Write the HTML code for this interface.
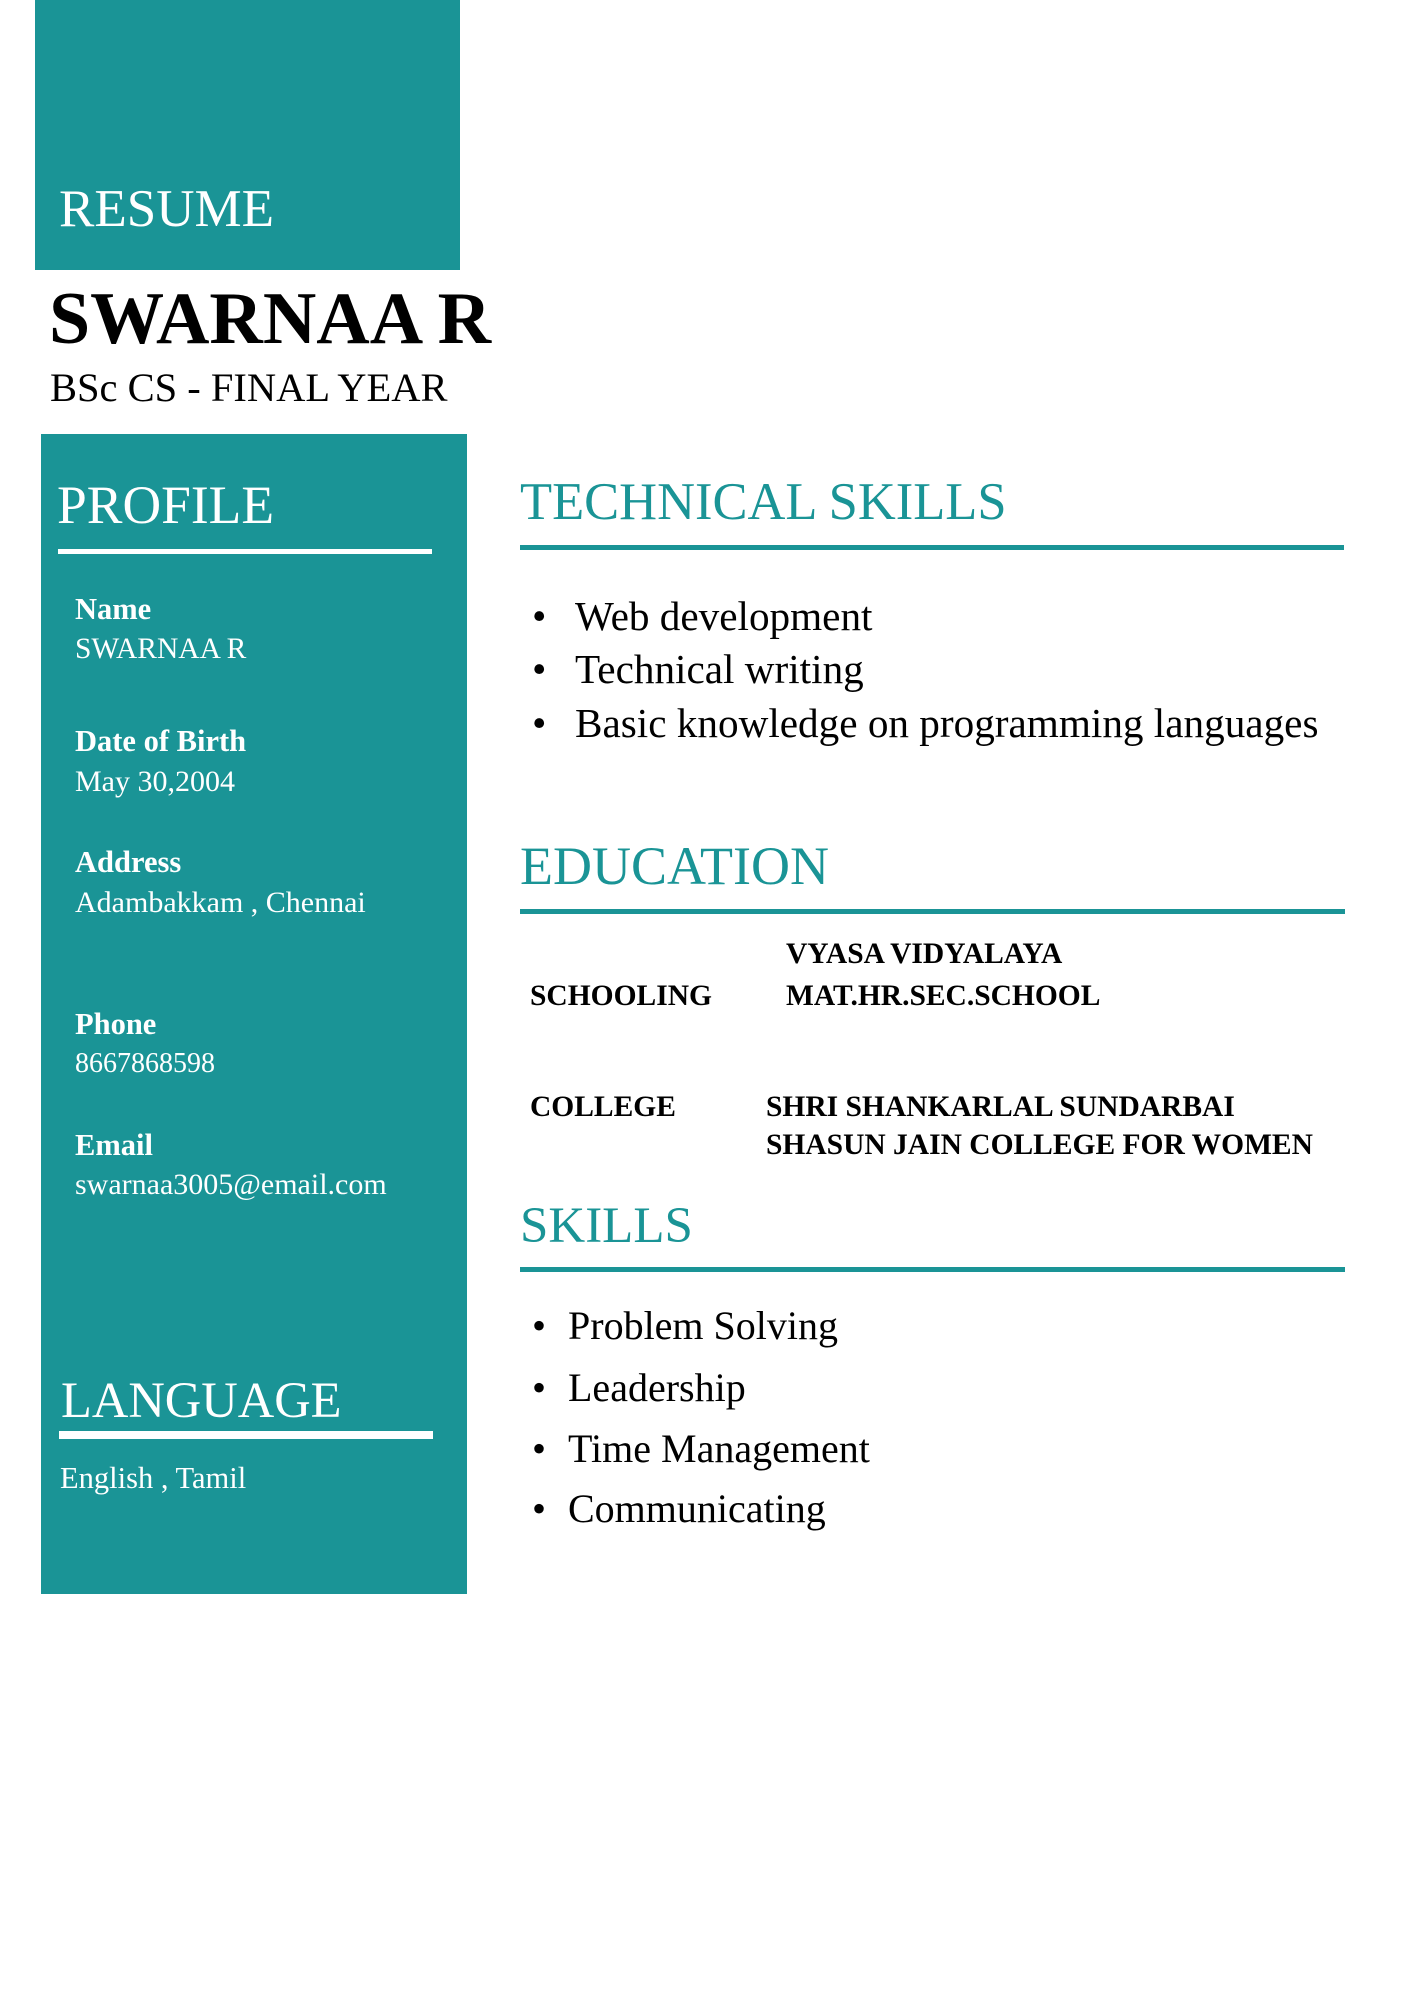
<!DOCTYPE html>
<html><head><meta charset="utf-8"><style>
*{margin:0;padding:0}
body{width:1414px;height:2000px;background:#fff;position:relative;overflow:hidden;font-family:"Liberation Serif",serif}
.t{position:absolute;white-space:nowrap;line-height:1}
.w{color:#fff}
.teal{color:#1a9496}
.box{position:absolute;background:#1a9496}
.ln{position:absolute}
.b{font-weight:bold}
</style></head><body>
<div class="box" style="left:35px;top:0;width:425px;height:270px"></div>
<div class="t w" style="left:59px;top:183px;font-size:53px">RESUME</div>
<div class="t b" style="left:49px;top:282px;font-size:74px">SWARNAA R</div>
<div class="t" style="left:50px;top:368px;font-size:40.5px">BSc CS - FINAL YEAR</div>

<div class="box" style="left:41px;top:434px;width:426px;height:1160px"></div>
<div class="t w" style="left:57px;top:479px;font-size:53.5px">PROFILE</div>
<div class="ln" style="left:58px;top:549px;width:374px;height:5px;background:#fff"></div>

<div class="t w b" style="left:75px;top:594px;font-size:30.5px">Name</div>
<div class="t w" style="left:75px;top:635px;font-size:29.5px">SWARNAA R</div>
<div class="t w b" style="left:75px;top:726px;font-size:30.5px">Date of Birth</div>
<div class="t w" style="left:75px;top:767px;font-size:30px">May 30,2004</div>
<div class="t w b" style="left:75px;top:847px;font-size:30.5px">Address</div>
<div class="t w" style="left:75px;top:888px;font-size:30px">Adambakkam , Chennai</div>
<div class="t w b" style="left:75px;top:1009px;font-size:30.5px">Phone</div>
<div class="t w" style="left:75px;top:1050px;font-size:28px">8667868598</div>
<div class="t w b" style="left:75px;top:1130px;font-size:30.5px">Email</div>
<div class="t w" style="left:75px;top:1170px;font-size:30px">swarnaa3005@email.com</div>

<div class="t w" style="left:61px;top:1375px;font-size:50.5px">LANGUAGE</div>
<div class="ln" style="left:59px;top:1431px;width:374px;height:8px;background:#fff"></div>
<div class="t w" style="left:60px;top:1463px;font-size:30.5px">English , Tamil</div>

<div class="t teal" style="left:520px;top:476px;font-size:52.5px">TECHNICAL SKILLS</div>
<div class="ln" style="left:520px;top:545px;width:824px;height:5px;background:#1a9496"></div>
<div class="t" style="left:532px;top:596px;font-size:41.2px">•</div>
<div class="t" style="left:575px;top:596px;font-size:41.2px">Web development</div>
<div class="t" style="left:532px;top:649px;font-size:41.2px">•</div>
<div class="t" style="left:575px;top:649px;font-size:41.2px">Technical writing</div>
<div class="t" style="left:532px;top:703px;font-size:41.2px">•</div>
<div class="t" style="left:575px;top:703px;font-size:41.2px">Basic knowledge on programming languages</div>

<div class="t teal" style="left:520px;top:839px;font-size:54px">EDUCATION</div>
<div class="ln" style="left:520px;top:909px;width:825px;height:5px;background:#1a9496"></div>
<div class="t b" style="left:786px;top:940px;font-size:29.5px">VYASA VIDYALAYA</div>
<div class="t b" style="left:530px;top:982px;font-size:29.5px">SCHOOLING</div>
<div class="t b" style="left:786px;top:982px;font-size:29.5px">MAT.HR.SEC.SCHOOL</div>
<div class="t b" style="left:530px;top:1093px;font-size:29.5px">COLLEGE</div>
<div class="t b" style="left:766px;top:1093px;font-size:29.5px">SHRI SHANKARLAL SUNDARBAI</div>
<div class="t b" style="left:766px;top:1131px;font-size:29.5px">SHASUN JAIN COLLEGE FOR WOMEN</div>

<div class="t teal" style="left:520px;top:1201px;font-size:51px">SKILLS</div>
<div class="ln" style="left:520px;top:1267px;width:825px;height:5px;background:#1a9496"></div>
<div class="t" style="left:532px;top:1306px;font-size:40px">•</div>
<div class="t" style="left:568px;top:1306px;font-size:40px">Problem Solving</div>
<div class="t" style="left:532px;top:1368px;font-size:40px">•</div>
<div class="t" style="left:568px;top:1368px;font-size:40px">Leadership</div>
<div class="t" style="left:532px;top:1429px;font-size:40px">•</div>
<div class="t" style="left:568px;top:1429px;font-size:40px">Time Management</div>
<div class="t" style="left:532px;top:1489px;font-size:40px">•</div>
<div class="t" style="left:568px;top:1489px;font-size:40px">Communicating</div>
</body></html>
